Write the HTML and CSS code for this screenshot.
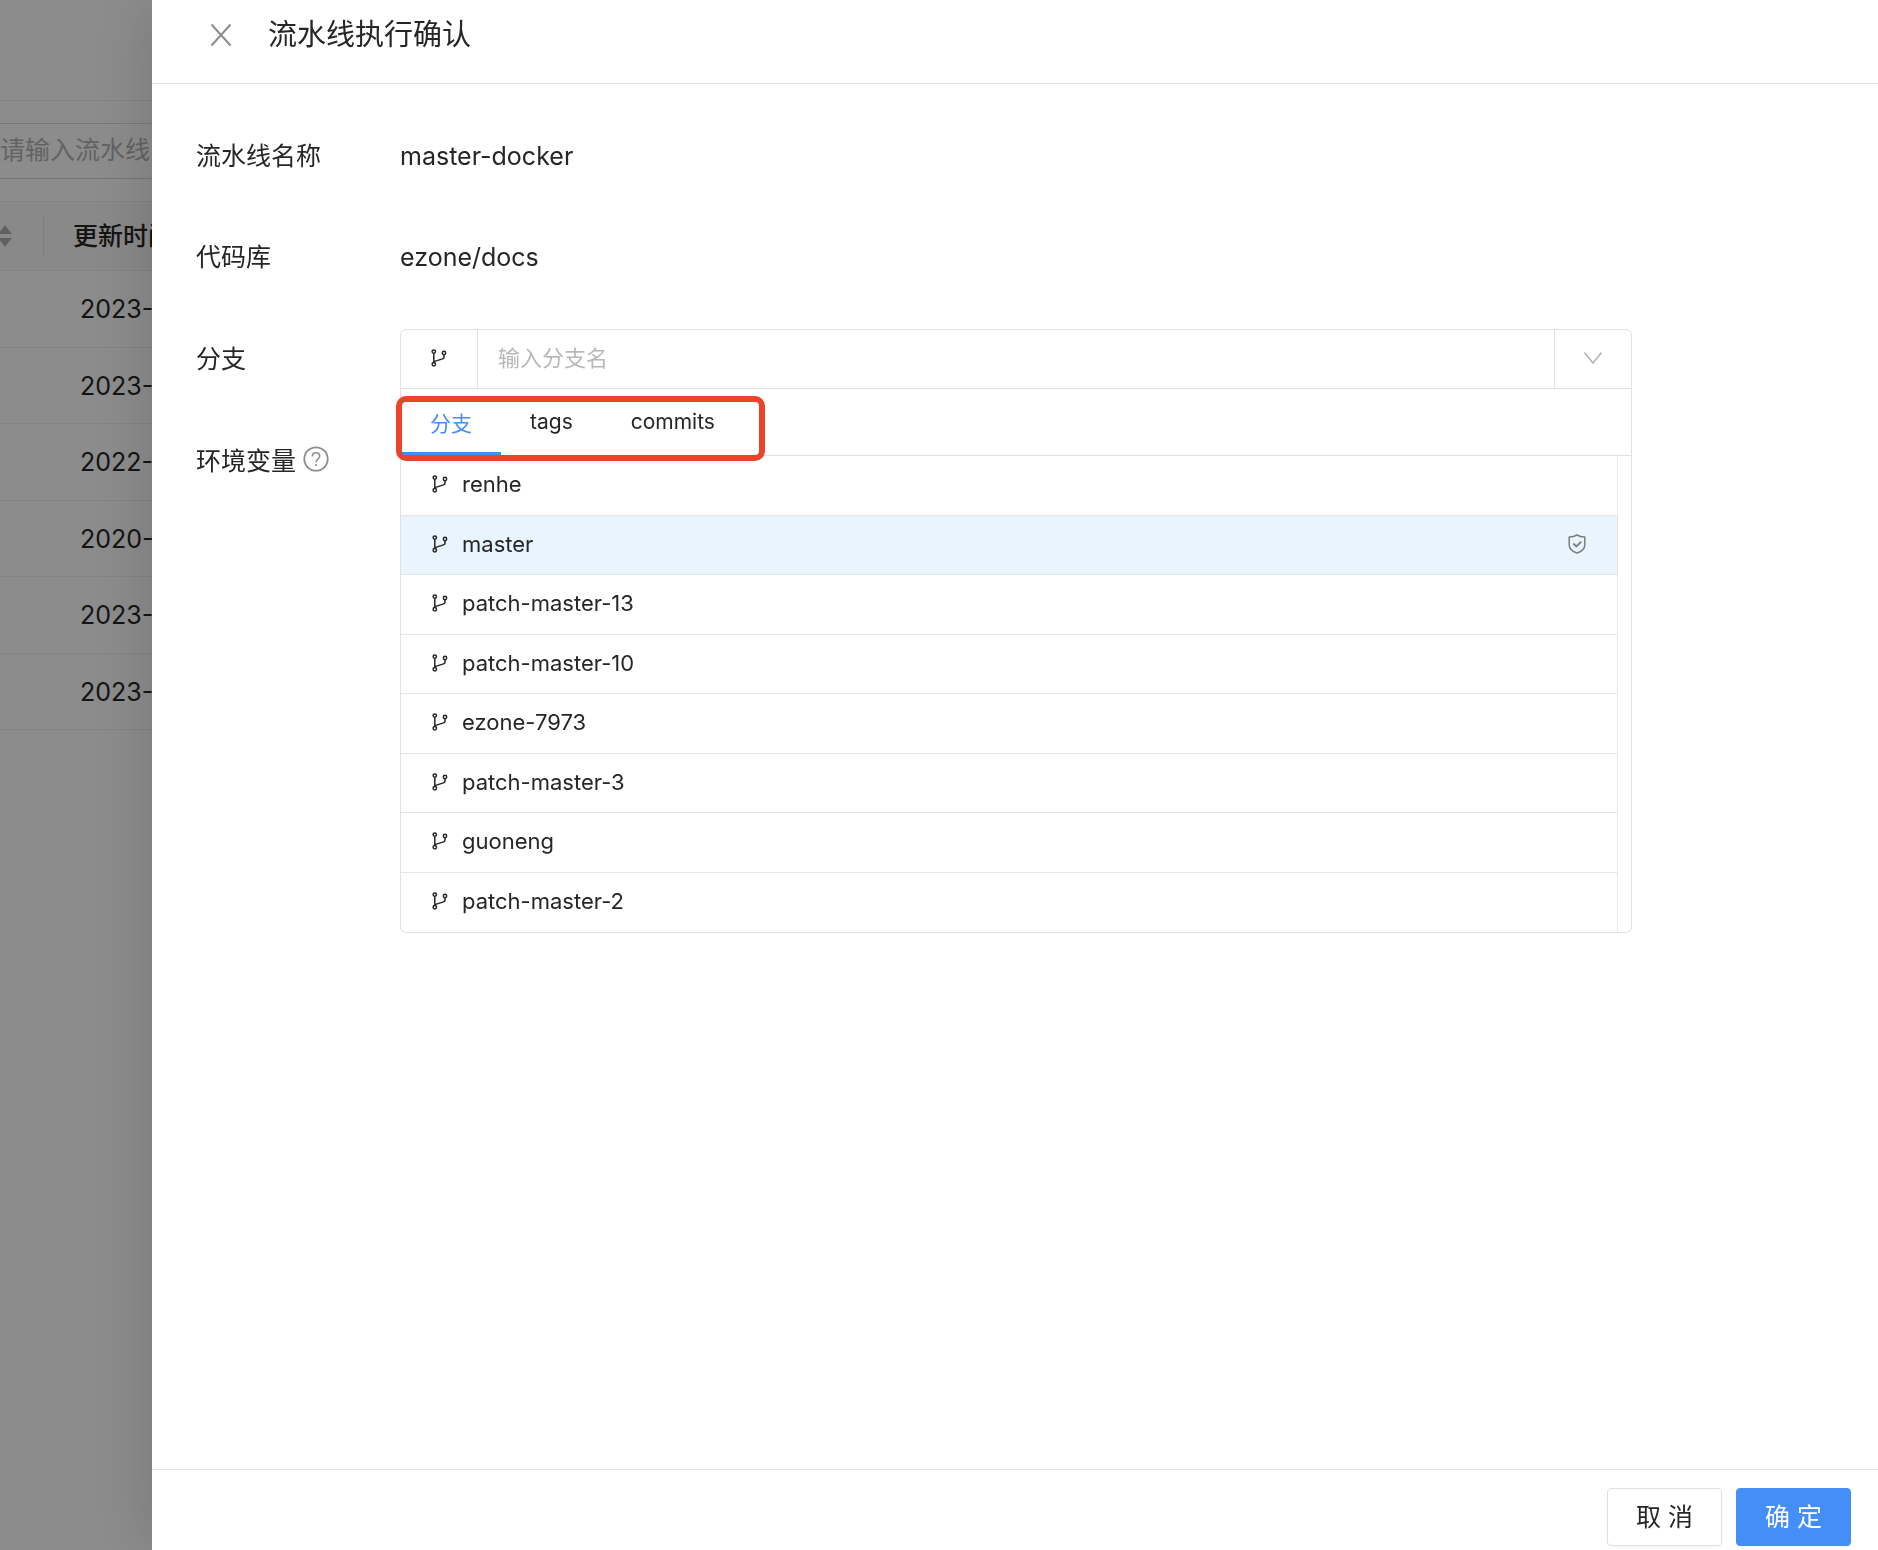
FILE: index.html
```html
<!DOCTYPE html>
<html lang="zh-CN">
<head>
  <meta charset="UTF-8">
  <meta name="viewport" content="width=device-width, initial-scale=1.0">
  <title>流水线执行确认</title>
  <link rel="stylesheet" href="styles.css">
</head>
<body>
  <svg class="sprite" aria-hidden="true">
    <symbol id="branch" viewBox="0 0 16 18">
      <g fill="none" stroke="currentColor" stroke-width="1.5">
        <circle cx="2.8" cy="2.6" r="1.7"/>
        <circle cx="2.8" cy="15.2" r="1.7"/>
        <circle cx="13" cy="4" r="1.7"/>
        <path d="M2.8 4.3v9.2M13 5.7v2.2q0 1.5-1.5 2L2.8 12.6"/>
      </g>
    </symbol>
  </svg>

  <main class="page">
    <div class="toolbar"></div>
    <div class="search">
      <input type="text" placeholder="请输入流水线" aria-label="请输入流水线">
    </div>
    <table class="pipelines">
      <thead>
        <tr>
          <th class="sort-col">
            <svg class="sorter" viewBox="0 0 14 22"><path d="M7 0l7 9H0zM7 22l7-9H0z" fill="currentColor"/></svg>
          </th>
          <th>更新时间</th>
        </tr>
      </thead>
      <tbody>
        <tr><td></td><td>2023-</td></tr>
        <tr><td></td><td>2023-</td></tr>
        <tr><td></td><td>2022-</td></tr>
        <tr><td></td><td>2020-</td></tr>
        <tr><td></td><td>2023-</td></tr>
        <tr><td></td><td>2023-</td></tr>
      </tbody>
    </table>
  </main>

  <div class="mask"></div>

  <section class="drawer" role="dialog" aria-labelledby="drawer-title">
    <header class="drawer-header">
      <button class="close" type="button" aria-label="关闭">
        <svg viewBox="0 0 22 24"><path d="M1.5 1.5l19 21M20.5 1.5l-19 21" fill="none" stroke="currentColor" stroke-width="2"/></svg>
      </button>
      <h1 id="drawer-title">流水线执行确认</h1>
    </header>

    <form class="drawer-body">
      <div class="field">
        <span class="label">流水线名称</span>
        <span>master-docker</span>
      </div>
      <div class="field">
        <span class="label">代码库</span>
        <span>ezone/docs</span>
      </div>
      <div class="field">
        <label class="label" for="branch-input">分支</label>
        <div class="picker">
          <div class="picker-input">
            <span class="addon"><svg class="icon-branch"><use href="#branch"/></svg></span>
            <input id="branch-input" type="text" placeholder="输入分支名">
            <button class="addon toggle" type="button" aria-label="展开">
              <svg viewBox="0 0 20 14"><path d="M1.5 1.5L10 12l8.500-10.500" fill="none" stroke="currentColor" stroke-width="1.6"/></svg>
            </button>
          </div>
          <div class="dropdown">
            <div class="tabs" role="tablist">
              <button class="tab active" type="button" role="tab" aria-selected="true">分支</button>
              <button class="tab" type="button" role="tab" aria-selected="false">tags</button>
              <button class="tab" type="button" role="tab" aria-selected="false">commits</button>
              <span class="highlight"></span>
            </div>
            <ul class="branches">
              <li><svg class="icon-branch"><use href="#branch"/></svg>renhe</li>
              <li class="selected">
                <svg class="icon-branch"><use href="#branch"/></svg>master
                <svg class="shield" viewBox="0 0 18 20"><path d="M9 1c2 1.300 4.600 2 7.800 2v8c0 3.800-3.200 6.500-7.800 8-4.600-1.500-7.800-4.200-7.800-8V3C4.400 3 7 2.300 9 1z" fill="none" stroke="currentColor" stroke-width="1.5" stroke-linejoin="round"/><path d="M5.300 9.500l3 3 5-4.800" fill="none" stroke="currentColor" stroke-width="1.800"/></svg>
              </li>
              <li><svg class="icon-branch"><use href="#branch"/></svg>patch-master-13</li>
              <li><svg class="icon-branch"><use href="#branch"/></svg>patch-master-10</li>
              <li><svg class="icon-branch"><use href="#branch"/></svg>ezone-7973</li>
              <li><svg class="icon-branch"><use href="#branch"/></svg>patch-master-3</li>
              <li><svg class="icon-branch"><use href="#branch"/></svg>guoneng</li>
              <li><svg class="icon-branch"><use href="#branch"/></svg>patch-master-2</li>
            </ul>
          </div>
        </div>
      </div>
      <div class="field">
        <span class="label">环境变量
          <svg class="help" viewBox="0 0 26 26"><g fill="none" stroke="currentColor"><circle cx="13" cy="13" r="11.700" stroke-width="1.800"/><path d="M9.300 10.500c0-2.200 1.600-3.700 3.700-3.700s3.700 1.400 3.700 3.400c0 2.600-3.700 2.700-3.700 6" stroke-width="1.500"/></g><circle cx="13" cy="19" r="1" fill="currentColor"/></svg>
        </span>
      </div>
    </form>

    <footer class="drawer-footer">
      <button class="btn" type="button">取 消</button>
      <button class="btn primary" type="button">确 定</button>
    </footer>
  </section>
</body>
</html>
```
FILE: styles.css
```css
* {
  box-sizing: border-box;
}
body {
  margin: 0;
  height: 100vh;
  overflow: hidden;
  font-family: Inter, "Noto Sans CJK SC", sans-serif;
  font-size: 25px;
  color: #262626;
  background: #fff;
}
button, input {
  font: inherit;
  color: inherit;
  padding: 0;
  border: 0;
  background: none;
}
input {
  outline: none;
}
.sprite {
  position: absolute;
  width: 0;
  height: 0;
}

/* page behind the drawer */
.toolbar {
  height: 101px;
  border-bottom: 1px solid #eee;
}
.search {
  padding: 22px 0;
}
.search input {
  display: block;
  width: 100%;
  height: 56px;
  padding-bottom: 2px;
  border: solid #d9d9d9;
  border-width: 1px 0;
}
.search input::placeholder {
  color: #b4b4b4;
  opacity: 1;
}
.pipelines {
  width: 100%;
  border-collapse: separate;
  border-spacing: 0;
  table-layout: fixed;
}
.pipelines th, .pipelines td {
  height: 77px;
  padding: 0 0 0 36px;
  text-align: left;
  border-bottom: 1px solid #eee;
}
.pipelines tr:nth-child(even) td {
  height: 76px;
}
.pipelines th {
  height: 70px;
  padding: 0 0 4px 29px;
  font-weight: 500;
  background: #fafafa;
  border-top: 1px solid #eee;
}
.pipelines th.sort-col {
  width: 44px;
  padding: 0;
  background: linear-gradient(#e8e8e8, #e8e8e8) right center / 1px 40px no-repeat #fafafa;
}
.sorter {
  display: block;
  width: 14px;
  height: 22px;
  margin-left: -2px;
  color: #b0b0b0;
}
.mask {
  position: fixed;
  inset: 0;
  background: rgba(0, 0, 0, 0.45);
}

/* drawer */
.drawer {
  position: fixed;
  top: 0;
  right: 0;
  bottom: 0;
  left: 152px;
  display: flex;
  flex-direction: column;
  background: #fff;
  box-shadow: -6px 0 60px rgba(0, 0, 0, 0.14);
}
.drawer-header {
  display: flex;
  align-items: center;
  gap: 36px;
  padding: 14px 58px 27px;
  border-bottom: 1px solid #e2e4e6;
}
.drawer-header h1 {
  margin: 0;
  font-size: 29px;
  line-height: 42px;
  font-weight: 400;
}
.close {
  display: flex;
  width: 22px;
  color: #8c8c8c;
}
.close svg {
  width: 22px;
  height: 24px;
}
.drawer-body {
  flex: 1;
  display: flex;
  flex-direction: column;
  gap: 43px;
  padding: 43px 246px 0 44px;
}
.field {
  display: grid;
  grid-template-columns: 204px 1fr;
  align-items: center;
  min-height: 58px;
}
.label {
  display: flex;
  align-items: center;
  gap: 7px;
  padding-bottom: 4px;
}
.help {
  width: 26px;
  height: 26px;
  color: #8c8c8c;
}

/* branch picker */
.picker {
  position: relative;
  font-size: 22px;
}
.picker-input {
  display: flex;
  height: 60px;
  border: 1px solid #dfe2e5;
  border-radius: 6px 6px 0 0;
}
.picker-input input {
  flex: 1;
  min-width: 0;
  padding: 0 20px 2px;
}
.picker-input input::placeholder {
  color: #b8b8b8;
  opacity: 1;
}
.addon {
  display: flex;
  align-items: center;
  justify-content: center;
  width: 77px;
  padding-bottom: 3px;
  border-right: 1px solid #dfe2e5;
}
.toggle {
  border-right: 0;
  border-left: 1px solid #dfe2e5;
  color: #b4b4b4;
}
.toggle svg {
  width: 20px;
  height: 14px;
}
.icon-branch {
  flex: none;
  width: 16px;
  height: 18px;
}
.dropdown {
  position: absolute;
  top: 100%;
  left: 0;
  right: 0;
  border: 1px solid #dfe2e5;
  border-top: 0;
  border-radius: 0 0 6px 6px;
  background: #fff;
}
.tabs {
  position: relative;
  display: flex;
  height: 67px;
  border-bottom: 1px solid #dfe2e5;
}
.tab {
  padding: 2px 29px 0;
  border-bottom: 3px solid transparent;
  font-size: 21px;
}
.tab.active {
  color: #448ef7;
  border-bottom-color: #448ef7;
}
.highlight {
  position: absolute;
  top: 7px;
  left: -5px;
  width: 369px;
  height: 65px;
  border: 6px solid #ec4428;
  border-radius: 10px;
  pointer-events: none;
}
.branches {
  margin: 0 13px 0 0;
  padding: 0;
  list-style: none;
  border-right: 1px solid #e6e9eb;
}
.branches li {
  display: flex;
  align-items: center;
  gap: 14px;
  height: 60px;
  padding: 0 31px 3px;
  border-bottom: 1px solid #e3e7ea;
}
.branches li:nth-child(even) {
  height: 59px;
}
.branches li:last-child {
  border-bottom: 0;
}
.branches .selected {
  background: #e8f5fe;
}
.shield {
  width: 18px;
  height: 20px;
  margin-left: auto;
  color: #7d7d7d;
}

.drawer-footer {
  display: flex;
  justify-content: flex-end;
  gap: 14px;
  padding: 18px 27px 4px;
  border-top: 1px solid #e2e4e6;
}
.btn {
  width: 115px;
  height: 58px;
  padding-bottom: 4px;
  border: 1px solid #dfe2e5;
  border-radius: 4px;
  background: #fff;
  box-shadow: 0 2px 2px rgba(0, 0, 0, 0.03);
}
.btn.primary {
  color: #fff;
  border-color: #448ef7;
  background: #448ef7;
}
```
